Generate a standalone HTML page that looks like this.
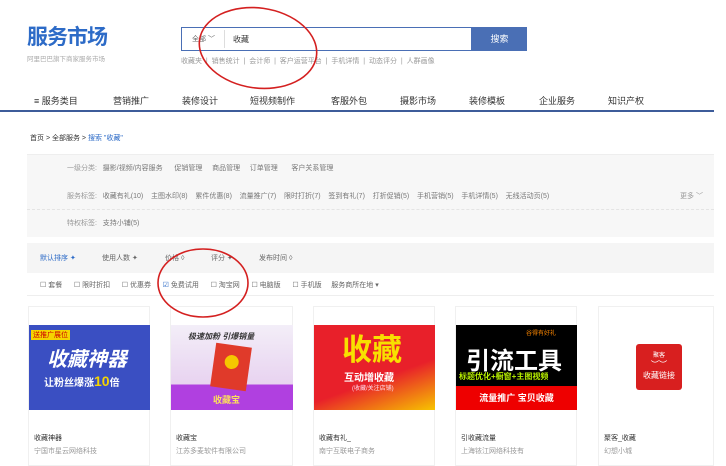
<!DOCTYPE html>
<html><head><meta charset="utf-8"><style>
*{margin:0;padding:0;box-sizing:border-box}
body{width:726px;height:452px;overflow:hidden;background:#fff;font-family:"Liberation Sans","Noto Sans CJK SC",sans-serif;position:relative;color:#333}
.a{position:absolute;white-space:nowrap}
.s{font-size:7px;color:#666}
.card{position:absolute;top:306px;height:160px;border:1px solid #f0f0f0;background:#fff}
.img{position:absolute;top:325px;height:85px;overflow:hidden}
</style></head><body>
<div class="a" style="left:27px;top:25px;font-size:21px;line-height:26px;font-weight:bold;color:#2d6bc7;letter-spacing:-1px">服务市场</div>
<div class="a" style="left:27px;top:53px;font-size:6.5px;color:#aaa">阿里巴巴旗下商家服务市场</div>
<div class="a" style="left:181px;top:27px;width:291px;height:24px;border:1px solid #4a6fb5"></div>
<div class="a" style="left:192px;top:34px;font-size:7px;color:#666">全部 ﹀</div>
<div class="a" style="left:224px;top:30px;width:1px;height:18px;background:#ddd"></div>
<div class="a" style="left:233px;top:34px;font-size:8px;color:#333">收藏</div>
<div class="a" style="left:472px;top:27px;width:55px;height:24px;background:#4a6fb5;color:#fff;font-size:9px;text-align:center;line-height:24px">搜索</div>
<div class="a s" style="left:181px;top:56px;color:#999">收藏夹 &nbsp;| &nbsp;销售统计 &nbsp;| &nbsp;会计师 &nbsp;| &nbsp;客户运营平台 &nbsp;| &nbsp;手机详情 &nbsp;| &nbsp;动态评分 &nbsp;| &nbsp;人群画像</div>
<div class="a" style="left:34px;top:94px;font-size:9px;color:#333">≡ 服务类目</div>
<div class="a" style="left:113px;top:94px;font-size:9px">营销推广</div>
<div class="a" style="left:182px;top:94px;font-size:9px">装修设计</div>
<div class="a" style="left:250px;top:94px;font-size:9px">短视频制作</div>
<div class="a" style="left:331px;top:94px;font-size:9px">客服外包</div>
<div class="a" style="left:400px;top:94px;font-size:9px">摄影市场</div>
<div class="a" style="left:469px;top:94px;font-size:9px">装修模板</div>
<div class="a" style="left:539px;top:94px;font-size:9px">企业服务</div>
<div class="a" style="left:608px;top:94px;font-size:9px">知识产权</div>
<div class="a" style="left:0;top:110px;width:714px;height:2px;background:#3d5c9a"></div>
<div class="a s" style="left:30px;top:133px;color:#333">首页 &gt; 全部服务 &gt; <span style="color:#2d6bc7">搜索 "收藏"</span></div>
<div class="a" style="left:27px;top:154px;width:687px;height:83px;background:#f7f7f7;border-top:1px solid #eee"></div>
<div class="a" style="left:27px;top:209px;width:687px;border-top:1px dashed #e4e4e4"></div>
<div class="a s" style="left:67px;top:163px;color:#999">一级分类: <span style="color:#777">&nbsp; 摄影/视频/内容服务 &nbsp;&nbsp;&nbsp;&nbsp; 促销管理 &nbsp;&nbsp;&nbsp; 商品管理 &nbsp;&nbsp;&nbsp; 订单管理 &nbsp;&nbsp;&nbsp;&nbsp;&nbsp; 客户关系管理</span></div>
<div class="a s" style="left:67px;top:191px;color:#999">服务标签: <span style="color:#777">&nbsp; 收藏有礼(10) &nbsp;&nbsp; 主图水印(8) &nbsp;&nbsp; 累件优惠(8) &nbsp;&nbsp; 流量推广(7) &nbsp;&nbsp; 限时打折(7) &nbsp;&nbsp; 签到有礼(7) &nbsp;&nbsp; 打折促销(5) &nbsp;&nbsp; 手机营销(5) &nbsp;&nbsp; 手机详情(5) &nbsp;&nbsp; 无线活动页(5)</span></div>
<div class="a s" style="left:680px;top:191px;color:#999">更多 ﹀</div>
<div class="a s" style="left:67px;top:218px;color:#999">特权标签: <span style="color:#777">&nbsp; 支持小铺(5)</span></div>
<div class="a" style="left:27px;top:243px;width:687px;height:30px;background:#f5f5f5"></div>
<div class="a s" style="left:40px;top:253px;color:#2d6bc7">默认排序 ✦</div>
<div class="a s" style="left:102px;top:253px">使用人数 ✦</div>
<div class="a s" style="left:165px;top:253px">价格 ◊</div>
<div class="a s" style="left:211px;top:253px">评分 ✦</div>
<div class="a s" style="left:259px;top:253px">发布时间 ◊</div>
<div class="a s" style="left:40px;top:280px">☐ 套餐 &nbsp;&nbsp;&nbsp;&nbsp; ☐ 限时折扣 &nbsp;&nbsp;&nbsp;&nbsp; ☐ 优惠券 &nbsp;&nbsp;&nbsp;&nbsp; <span style="color:#2d6bc7">☑</span> 免费试用 &nbsp;&nbsp;&nbsp;&nbsp; ☐ 淘宝网 &nbsp;&nbsp;&nbsp;&nbsp; ☐ 电脑版 &nbsp;&nbsp;&nbsp;&nbsp; ☐ 手机版 &nbsp;&nbsp;&nbsp; 服务商所在地 ▾</div>
<div class="a" style="left:27px;top:295px;width:687px;height:1px;background:#eee"></div>

<div class="card" style="left:28px;width:122px"></div>
<div class="card" style="left:170px;width:123px"></div>
<div class="card" style="left:313px;width:122px"></div>
<div class="card" style="left:455px;width:122px"></div>
<div class="card" style="left:598px;width:116px"></div>

<div class="img" style="left:29px;width:121px;background:#3a4fc2">
 <div class="a" style="left:2px;top:5px;background:#f5d400;color:#c00;font-size:7px;padding:0 2px">送推广展位</div>
 <div class="a" style="left:18px;top:18px;color:#fff;font-size:20px;font-weight:bold;font-style:italic">收藏神器</div>
 <div class="a" style="left:15px;top:48px;color:#fff;font-size:10px;font-weight:bold">让粉丝爆涨<span style="color:#f5d400;font-size:14px">10</span>倍</div>
</div>
<div class="img" style="left:171px;width:122px;background:linear-gradient(#f3eef8,#e8d3f0 70%,#b040e0 70%)">
 <div class="a" style="left:17px;top:6px;font-size:8px;font-weight:bold;font-style:italic;color:#333">极速加粉 引爆销量</div>
 <div class="a" style="left:42px;top:20px;width:36px;height:44px;background:#e03a2a;transform:rotate(8deg)"><div style="margin:10px auto;width:14px;height:14px;border-radius:50%;background:#f5c800"></div></div>
 <div class="a" style="left:42px;top:68px;color:#fde05a;font-size:9px;font-weight:bold">收藏宝</div>
</div>
<div class="img" style="left:314px;width:121px;background:linear-gradient(160deg,#e8202a 60%,#f7c400)">
 <div class="a" style="left:28px;top:0;color:#f8e000;font-size:30px;font-weight:bold">收藏</div>
 <div class="a" style="left:30px;top:44px;color:#fff;font-size:10px;font-weight:bold">互动增收藏</div>
 <div class="a" style="left:38px;top:58px;color:#fde;font-size:6px">(收藏/关注店铺)</div>
</div>
<div class="img" style="left:456px;width:121px;background:#000">
 <div class="a" style="left:70px;top:3px;color:#f80;font-size:6px">谷得有好礼</div>
 <div class="a" style="left:10px;top:16px;color:#fff;font-size:24px;font-weight:bold">引流工具</div>
 <div class="a" style="left:3px;top:46px;color:#b8f000;font-size:8px;font-weight:bold">标题优化+橱窗+主图视频</div>
 <div class="a" style="left:0;top:61px;width:121px;height:24px;background:#e00;color:#fff;font-size:9px;font-weight:bold;text-align:center;line-height:24px">流量推广 宝贝收藏</div>
</div>
<div class="a" style="left:636px;top:344px;width:46px;height:46px;background:#d81f1f;border-radius:3px;color:#fff;text-align:center">
 <div style="font-size:6px;margin-top:6px">聚客</div><div style="font-size:8px">︶︶</div><div style="font-size:8px">收藏链接</div>
</div>

<div class="a s" style="left:34px;top:433px;color:#333">收藏神器</div>
<div class="a s" style="left:176px;top:433px;color:#333">收藏宝</div>
<div class="a s" style="left:319px;top:433px;color:#333">收藏有礼_</div>
<div class="a s" style="left:461px;top:433px;color:#333">引收藏流量</div>
<div class="a s" style="left:604px;top:433px;color:#333">聚客_收藏</div>
<div class="a s" style="left:34px;top:446px;color:#999">宁国市星云网络科技</div>
<div class="a s" style="left:176px;top:446px;color:#999">江苏多麦软件有限公司</div>
<div class="a s" style="left:319px;top:446px;color:#999">南宁互联电子商务</div>
<div class="a s" style="left:461px;top:446px;color:#999">上海铱江网络科技有</div>
<div class="a s" style="left:604px;top:446px;color:#999">幻想小城</div>

<svg class="a" style="left:0;top:0" width="726" height="452">
 <ellipse cx="258" cy="48" rx="59" ry="40" fill="none" stroke="#d42020" stroke-width="1.6" transform="rotate(8 258 48)"/>
 <ellipse cx="203" cy="283" rx="45" ry="34" fill="none" stroke="#d42020" stroke-width="1.6"/>
</svg>
</body></html>
